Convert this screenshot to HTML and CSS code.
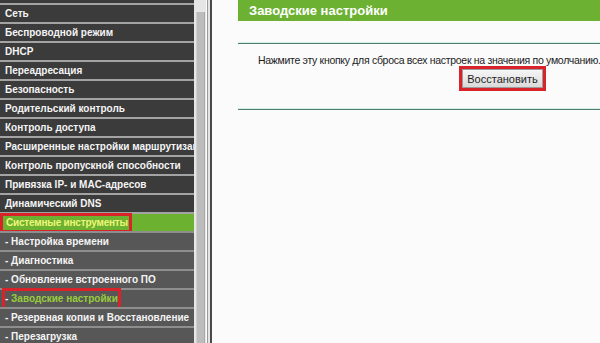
FILE: index.html
```html
<!DOCTYPE html>
<html lang="ru">
<head>
    <meta charset="UTF-8">
    <title>Заводские настройки</title>
    <link rel="stylesheet" href="styles.css">
</head>
<body>
    <div class="frame">
        <nav class="menu">
            <div class="menu-top"></div>
            <div class="item">Сеть</div>
            <div class="item">Беспроводной режим</div>
            <div class="item">DHCP</div>
            <div class="item">Переадресация</div>
            <div class="item">Безопасность</div>
            <div class="item">Родительский контроль</div>
            <div class="item">Контроль доступа</div>
            <div class="item">Расширенные настройки маршрутизации</div>
            <div class="item">Контроль пропускной способности</div>
            <div class="item">Привязка IP- и MAC-адресов</div>
            <div class="item">Динамический DNS</div>
            <div class="item item-open"><span class="mark mark-open">Системные инструменты</span></div>
            <div class="item sub">- Настройка времени</div>
            <div class="item sub">- Диагностика</div>
            <div class="item sub">- Обновление встроенного ПО</div>
            <div class="item sub sub-active"><span class="mark mark-sub">- <em>Заводские настройки</em></span></div>
            <div class="item sub">- Резервная копия и Восстановление</div>
            <div class="item sub">- Перезагрузка</div>
        </nav>
        <div class="scroll"><div class="thumb"></div></div>
        <div class="divider"></div>
        <main class="main">
            <div class="title">Заводские настройки</div>
            <div class="rule"></div>
            <p class="note">Нажмите эту кнопку для сброса всех настроек на значения по умолчанию.</p>
            <div class="action">
                <span class="btn-mark"><button class="btn">Восстановить</button></span>
            </div>
            <div class="rule rule-bottom"></div>
        </main>
    </div>
</body>
</html>
```

FILE: styles.css
```css
body {
    margin: 0;
    background-color: #fbfbfb;
    font-family: "Liberation Sans", Arial, sans-serif;
    overflow: hidden;
}
.frame {
    display: flex;
    height: 343px;
}
.menu {
    width: 194px;
    flex-shrink: 0;
    background-color: #3b3b3b;
    overflow: hidden;
}
.menu-top {
    height: 3px;
    background-color: #3b3b3b;
}
.item {
    position: relative;
    height: 17px;
    line-height: 17px;
    border-top: 2px solid #a3a3a3;
    padding-left: 5px;
    background-color: #3b3b3b;
    color: #f4f4f4;
    font-size: 10px;
    font-weight: bold;
    white-space: nowrap;
}
.item-open {
    background-color: #6cb130;
    color: #eef77a;
    padding-left: 0;
}
.sub {
    background-color: #575757;
    border-top-color: #8e8e8e;
}
.sub-active em {
    font-style: normal;
    color: #97cc3c;
}
.mark-open {
    display: inline-block;
    height: 14px;
    line-height: 14px;
    margin-top: -2px;
    padding: 0 1px 0 3px;
    border: 3px solid #d8232b;
    letter-spacing: -0.2px;
}
.mark-sub {
    position: relative;
    display: inline-block;
    height: 17px;
}
.mark-sub::after {
    content: "";
    position: absolute;
    left: -3px;
    top: -2px;
    width: 113px;
    height: 18px;
    border: 3px solid #d8232b;
}
.scroll {
    width: 12px;
    flex-shrink: 0;
    background-color: #e6e6e6;
    padding: 12px 1px 0 2px;
    box-sizing: border-box;
}
.thumb {
    height: 100%;
    background-color: #bcbcbc;
    border-left: 1px solid #cfcfcf;
    border-right: 1px solid #a9a9a9;
}
.divider {
    width: 5px;
    flex-shrink: 0;
    background-color: #e4e4e4;
    border-left: 1px solid #9a9a9a;
    border-right: 2px solid #4a4a4a;
    box-sizing: border-box;
    margin-left: 1px;
}
.main {
    flex: 1;
    padding: 0 6px 0 26px;
}
.title {
    height: 21px;
    line-height: 21px;
    background-color: #6cb131;
    color: #ffffff;
    font-size: 13px;
    font-weight: bold;
    padding-left: 11px;
}
.rule {
    margin-top: 21px;
    height: 1px;
    border-top: 1px solid #d4efe6;
    background-color: #4f7f6e;
}
.note {
    margin: 10px 0 0 20px;
    font-size: 10.5px;
    letter-spacing: -0.3px;
    line-height: 13px;
    color: #222222;
    white-space: nowrap;
}
.action {
    margin-top: -1px;
    padding-left: 221px;
    height: 25px;
}
.btn-mark {
    display: inline-block;
    border: 3px solid #d8232b;
}
.btn {
    display: block;
    width: 81px;
    height: 19px;
    margin: 0;
    padding: 0;
    border: 1px solid #9c9c9c;
    background: linear-gradient(#f6f6f6, #dadada);
    font-family: "Liberation Sans", Arial, sans-serif;
    font-size: 11px;
    color: #1e1e1e;
}
.rule-bottom {
    margin-top: 17px;
}
```
